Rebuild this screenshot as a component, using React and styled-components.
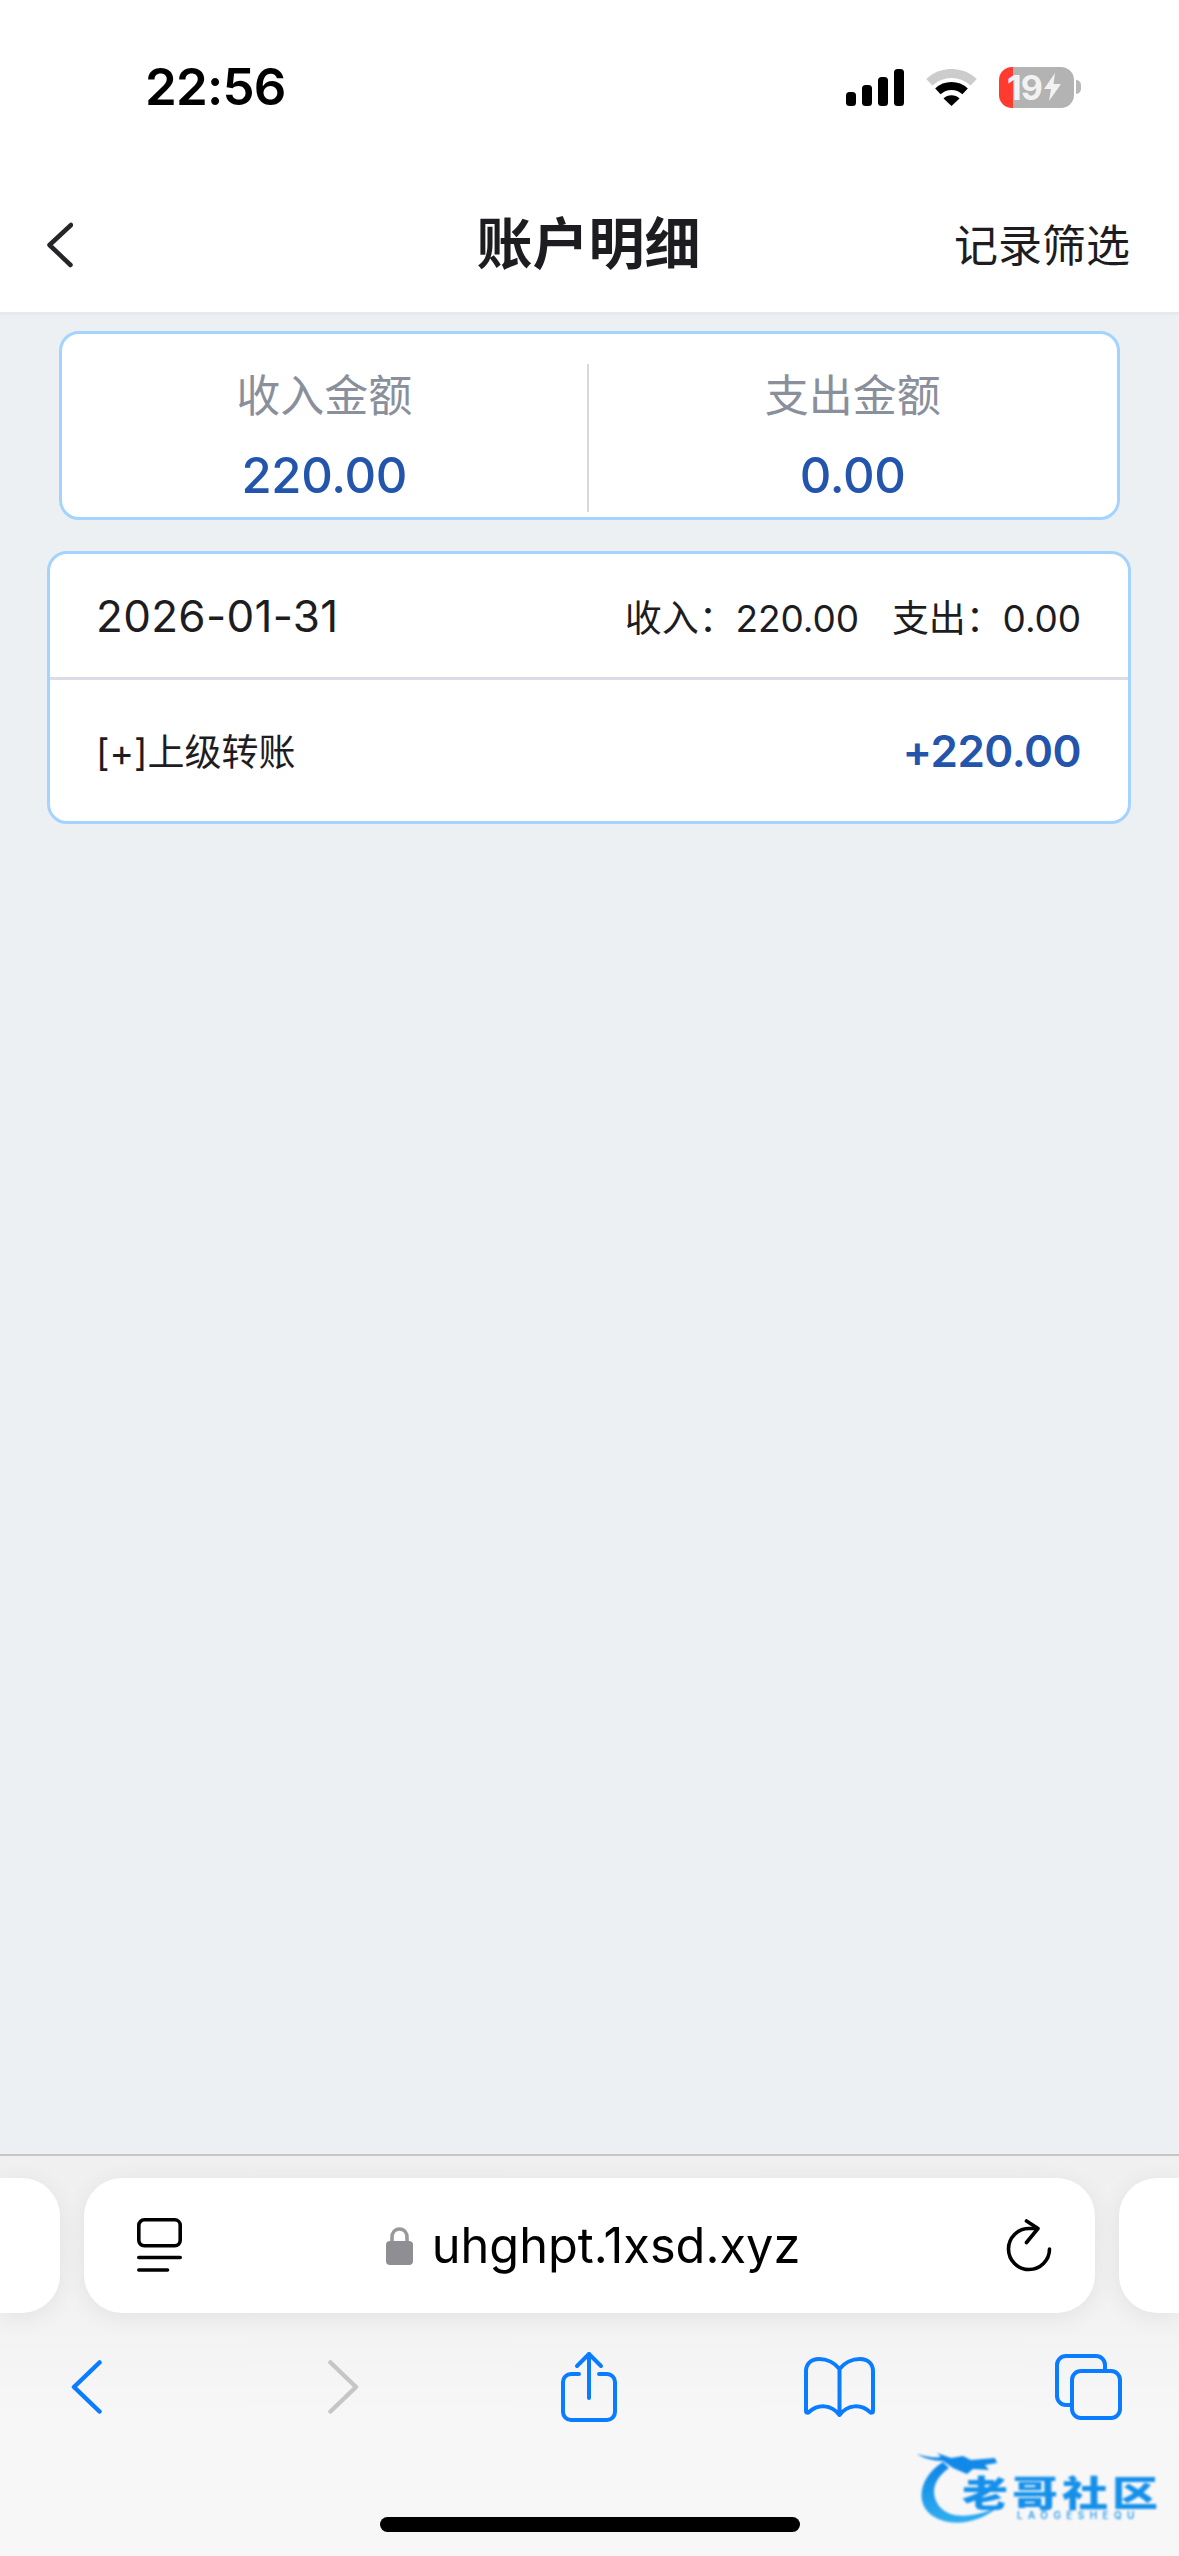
import React from "react";
import styled, { createGlobalStyle } from "styled-components";

const GlobalStyle = createGlobalStyle`
    html, body {
        margin: 0;
        padding: 0;
    }
    body {
        background: #ecf0f3;
        font-family: Inter, "Noto Sans CJK SC", sans-serif;
    }
`;

const SUMMARY = [
    { label: "收入金额", value: "220.00" },
    { label: "支出金额", value: "0.00" },
];

const Signal = () => (
    <svg width="58" height="37" viewBox="0 0 58 37">
        <rect x="0" y="23" width="10" height="14" rx="3.5" fill="#000" />
        <rect x="16" y="16" width="10" height="21" rx="3.5" fill="#000" />
        <rect x="32" y="8" width="10" height="29" rx="3.5" fill="#000" />
        <rect x="48" y="0" width="10" height="37" rx="3.5" fill="#000" />
    </svg>
);

const Wifi = () => (
    <svg width="51" height="37" viewBox="0 0 51 37" fill="none">
        <path d="M3.3 13.2A32.5 32.5 0 0 1 47.7 13.2" stroke="#cccccc" strokeWidth="9" />
        <path d="M11.9 22.4A20 20 0 0 1 39.1 22.4" stroke="#000" strokeWidth="8" />
        <path d="M25.5 37L17.5 29.5A11.5 11.5 0 0 1 33.5 29.5Z" fill="#000" />
    </svg>
);

const Bolt = () => (
    <svg width="17" height="28" viewBox="0 0 17 28">
        <path d="M11 0L0 16H7L5 28L17 11H9.5Z" fill="#f2f2f2" />
    </svg>
);

const BackChevron = () => (
    <svg width="26" height="46" viewBox="0 0 26 46" fill="none">
        <path d="M24 3L2.500 23L23.500 43" stroke="#26262a" strokeWidth="4.500" strokeLinecap="round" strokeLinejoin="round" />
    </svg>
);

const TabsOverview = () => (
    <svg width="45" height="56" viewBox="0 0 45 56" fill="none" stroke="#000" strokeLinecap="round">
        <rect x="1.8" y="1.8" width="41.4" height="26" rx="5.5" strokeWidth="3.6" />
        <path d="M1.8 39.5H43.2" strokeWidth="3.6" />
        <path d="M1.8 52H30.5" strokeWidth="3.6" />
    </svg>
);

const Lock = () => (
    <svg width="27" height="38" viewBox="0 0 27 38" fill="none">
        <path d="M6 17V10.5C6 5.5 9 2 13.500 2S21 5.500 21 10.500V17" stroke="#98989d" strokeWidth="3.600" />
        <rect x="0" y="14" width="27" height="24" rx="4" fill="#8e8e93" />
    </svg>
);

const Reload = () => (
    <svg width="46" height="53" viewBox="0 0 46 53" fill="none" stroke="#000" strokeWidth="3.600" strokeLinecap="round" strokeLinejoin="round">
        <path d="M31 9.500H23A20.500 20.500 0 1 0 43.500 30" />
        <path d="M20.500 2L32 9.500L20.500 23.500" />
    </svg>
);

const NavBack = ({ color }) => (
    <svg width="31" height="54" viewBox="0 0 31 54" fill="none">
        <path d="M28.500 2.500L3 27L28.500 51.500" stroke={color} strokeWidth="4.500" strokeLinecap="round" strokeLinejoin="round" />
    </svg>
);

const NavForward = ({ color }) => (
    <svg width="31" height="54" viewBox="0 0 31 54" fill="none">
        <path d="M2.500 2.500L28 27L2.500 51.500" stroke={color} strokeWidth="4.500" strokeLinecap="round" strokeLinejoin="round" />
    </svg>
);

const Share = () => (
    <svg width="56" height="72" viewBox="0 0 56 72" fill="none" stroke="#0a7cff" strokeWidth="4" strokeLinecap="round" strokeLinejoin="round">
        <path d="M18 23H10A8 8 0 0 0 2 31V61A8 8 0 0 0 10 69H46A8 8 0 0 0 54 61V31A8 8 0 0 0 46 23H38" />
        <path d="M28 3V47" />
        <path d="M16 15L28 3L40 15" />
    </svg>
);

const Book = () => (
    <svg width="71" height="60" viewBox="0 0 71 60" fill="none" stroke="#0a7cff" strokeWidth="4" strokeLinecap="round" strokeLinejoin="round">
        <path d="M35.500 12C31 6 23 2 15 2C7 2 2 7 2 14V54C2 56 4 56 5 55C14 47 27 47 35.500 58C44 47 57 47 66 55C67 56 69 56 69 54V14C69 7 64 2 56 2C48 2 40 6 35.500 12V58" />
    </svg>
);

const TabsStack = () => (
    <svg width="67" height="66" viewBox="0 0 67 66" fill="none" stroke="#0a7cff" strokeWidth="4" strokeLinejoin="round">
        <path d="M50 16V11A9 9 0 0 0 41 2H11A9 9 0 0 0 2 11V42A9 9 0 0 0 11 51H16" />
        <rect x="17" y="17" width="48" height="47" rx="9" />
    </svg>
);

const Dragon = () => (
    <svg width="86" height="82" viewBox="0 0 86 82">
        <defs>
            <linearGradient id="swirl" x1="0" y1="0" x2="0" y2="1">
                <stop offset="0" stopColor="#0d84e6" />
                <stop offset="1" stopColor="#31aef0" />
            </linearGradient>
        </defs>
        <path d="M28 14C8 26 -1 50 14 65C28 78 58 80 85 58C60 70 35 72 24 58C14 44 20 30 34 20Z" fill="url(#swirl)" />
        <path d="M2 6C12 9 20 10 26 9L22 5L36 10L48 8L56 12L80 10L82 15L70 17L74 22L58 21L52 26L38 20L28 13C18 13 8 10 2 6Z" fill="#1089e8" />
    </svg>
);

const App = () => {
    return (
        <Page>
            <GlobalStyle />
            <Header>
                <StatusBar>
                    <Clock>22:56</Clock>
                    <StatusIcons>
                        <Signal />
                        <Wifi />
                        <Battery>
                            <BatteryBody>
                                19
                                <Bolt />
                            </BatteryBody>
                            <BatteryNub />
                        </Battery>
                    </StatusIcons>
                </StatusBar>
                <NavBar>
                    <BackChevron />
                    <Title>账户明细</Title>
                    <FilterLink>记录筛选</FilterLink>
                </NavBar>
            </Header>
            <Main>
                <SummaryCard>
                    {SUMMARY.map((item, index) => (
                        <React.Fragment key={item.label}>
                            {index > 0 && <SummaryDivider />}
                            <SummaryCell>
                                <SummaryLabel>{item.label}</SummaryLabel>
                                <SummaryValue>{item.value}</SummaryValue>
                            </SummaryCell>
                        </React.Fragment>
                    ))}
                </SummaryCard>
                <DayCard>
                    <DayHead>
                        <DayDate>2026-01-31</DayDate>
                        <DayTotals>
                            <span>收入：220.00</span>
                            <span>支出：0.00</span>
                        </DayTotals>
                    </DayHead>
                    <RecordRow>
                        <RecordName>[+]上级转账</RecordName>
                        <RecordAmount>+220.00</RecordAmount>
                    </RecordRow>
                </DayCard>
            </Main>
            <Toolbar>
                <PillRow>
                    <SidePill $side="left" />
                    <UrlPill>
                        <TabsOverview />
                        <UrlCenter>
                            <Lock />
                            <UrlText>uhghpt.1xsd.xyz</UrlText>
                        </UrlCenter>
                        <Reload />
                    </UrlPill>
                    <SidePill $side="right" />
                </PillRow>
                <ToolIcons>
                    <NavBack color="#0a7cff" />
                    <NavForward color="#c6c6c8" />
                    <Share />
                    <Book />
                    <TabsStack />
                </ToolIcons>
                <HomeBar />
                <Watermark>
                    <Dragon />
                    <WatermarkName>老哥社区</WatermarkName>
                    <WatermarkLatin>LAOGESHEQU</WatermarkLatin>
                </Watermark>
            </Toolbar>
        </Page>
    );
};

const Page = styled.div`
    width: 1179px;
    height: 2556px;
    display: flex;
    flex-direction: column;
    overflow: hidden;
    background: #ecf0f3;
`;

const Header = styled.header`
    background: #fff;
    border-bottom: 3px solid #e8e9f0;
`;

const StatusBar = styled.div`
    height: 178px;
    box-sizing: border-box;
    padding: 65px 98px 0 145px;
    display: flex;
    justify-content: space-between;
    align-items: flex-start;
`;

const Clock = styled.div`
    font-size: 51px;
    line-height: 44px;
    font-weight: 600;
    letter-spacing: -0.8px;
    color: #000;
`;

const StatusIcons = styled.div`
    display: flex;
    align-items: center;
    gap: 22px;
    height: 44px;
`;

const Battery = styled.div`
    display: flex;
    align-items: center;
    gap: 2px;
`;

const BatteryBody = styled.div`
    width: 75px;
    height: 41px;
    box-sizing: border-box;
    padding-left: 8px;
    border-radius: 13px;
    background: linear-gradient(90deg, #ff3b30 14px, #b3b3b3 14px);
    display: flex;
    align-items: center;
    gap: 2px;
    color: #f2f2f2;
    font-size: 34px;
    font-weight: 700;
    letter-spacing: -1px;
`;

const BatteryNub = styled.div`
    width: 5px;
    height: 14px;
    border-radius: 0 7px 7px 0;
    background: #b8b8b8;
`;

const NavBar = styled.div`
    height: 134px;
    box-sizing: border-box;
    padding: 0 49px 0 47px;
    display: grid;
    grid-template-columns: 1fr auto 1fr;
    align-items: center;
`;

const Title = styled.h1`
    margin: 0 0 2px;
    font-size: 56px;
    line-height: 70px;
    font-weight: 700;
    color: #1d1d21;
`;

const FilterLink = styled.div`
    justify-self: end;
    margin-bottom: 4px;
    font-size: 44px;
    color: #1d1d21;
`;

const Main = styled.main`
    flex: 1;
    display: flex;
    flex-direction: column;
`;

const SummaryCard = styled.section`
    margin: 16px 59px 0 59px;
    height: 189px;
    box-sizing: border-box;
    border: 3px solid #a3d3ff;
    border-radius: 20px;
    background: #fff;
    display: flex;
`;

const SummaryCell = styled.div`
    flex: 1;
    padding: 32px 2px 0 0;
    display: flex;
    flex-direction: column;
    align-items: center;
    gap: 20px;
`;

const SummaryDivider = styled.div`
    width: 2px;
    height: 148px;
    margin: 30px 2px 0 -2px;
    background: #d8d8e2;
`;

const SummaryLabel = styled.div`
    font-size: 44px;
    line-height: 60px;
    color: #8a8f9c;
`;

const SummaryValue = styled.div`
    font-size: 49px;
    line-height: 60px;
    font-weight: 500;
    letter-spacing: -0.3px;
    color: #2355ad;
`;

const DayCard = styled.section`
    margin: 31px 48px 0 47px;
    box-sizing: border-box;
    border: 3px solid #a3d3ff;
    border-radius: 20px;
    background: #fff;
`;

const DayHead = styled.div`
    height: 126px;
    box-sizing: border-box;
    padding: 0 47px 0 46px;
    border-bottom: 3px solid #dcdce8;
    display: flex;
    justify-content: space-between;
    align-items: center;
`;

const DayDate = styled.div`
    font-size: 44px;
    letter-spacing: 0.3px;
    color: #1d1d21;
`;

const DayTotals = styled.div`
    display: flex;
    gap: 33px;
    font-size: 37px;
    letter-spacing: -0.1px;
    color: #1d1d21;
`;

const RecordRow = styled.div`
    height: 141px;
    box-sizing: border-box;
    padding: 0 47px 0 46px;
    display: flex;
    justify-content: space-between;
    align-items: center;
`;

const RecordName = styled.div`
    font-size: 37px;
    margin-bottom: 2px;
    color: #1d1d21;
`;

const RecordAmount = styled.div`
    font-size: 44px;
    font-weight: 600;
    letter-spacing: -0.5px;
    color: #2355ad;
`;

const Toolbar = styled.footer`
    position: relative;
    height: 402px;
    box-sizing: border-box;
    border-top: 2px solid #c6c6c8;
    background: linear-gradient(#f0f0f0 0, #f3f3f3 180px, #f7f7f8 260px);
`;

const PillRow = styled.div`
    margin-top: 22px;
    height: 135px;
    display: flex;
    gap: 24px;
`;

const SidePill = styled.div`
    width: 60px;
    background: #fff;
    border-radius: ${(p) => (p.$side === "left" ? "0 38px 38px 0" : "38px 0 0 38px")};
    box-shadow: 0 4px 24px rgba(0, 0, 0, 0.07);
`;

const UrlPill = styled.div`
    flex: 1;
    box-sizing: border-box;
    padding: 0 43px 0 53px;
    background: #fff;
    border-radius: 38px;
    box-shadow: 0 4px 24px rgba(0, 0, 0, 0.07);
    display: grid;
    grid-template-columns: auto 1fr auto;
    align-items: center;
`;

const UrlCenter = styled.div`
    display: flex;
    justify-content: center;
    align-items: center;
    gap: 19px;
    padding-right: 2px;
`;

const UrlText = styled.div`
    font-size: 48.700px;
    color: #000;
`;

const ToolIcons = styled.div`
    margin-top: 38px;
    height: 72px;
    display: grid;
    grid-template-columns: 172px 342px 150px 350px 148px;
    justify-items: center;
    align-items: center;
`;

const HomeBar = styled.div`
    width: 420px;
    height: 15px;
    margin: 94px auto 0;
    border-radius: 8px;
    background: #000;
`;

const Watermark = styled.div`
    position: absolute;
    left: 915px;
    top: 292px;
    width: 250px;
    height: 84px;
    filter: blur(0.8px);
`;

const WatermarkName = styled.div`
    position: absolute;
    left: 47px;
    top: 27px;
    font-size: 46px;
    line-height: 33px;
    font-weight: 900;
    letter-spacing: 4px;
    white-space: nowrap;
    color: #1590ea;
    font-family: "Noto Sans CJK SC", sans-serif;
    transform: scaleY(0.78);
`;

const WatermarkLatin = styled.div`
    position: absolute;
    left: 102px;
    top: 62px;
    font-size: 10px;
    line-height: 10px;
    font-weight: 600;
    letter-spacing: 5.400px;
    white-space: nowrap;
    color: #2f9fea;
`;

export default App;
